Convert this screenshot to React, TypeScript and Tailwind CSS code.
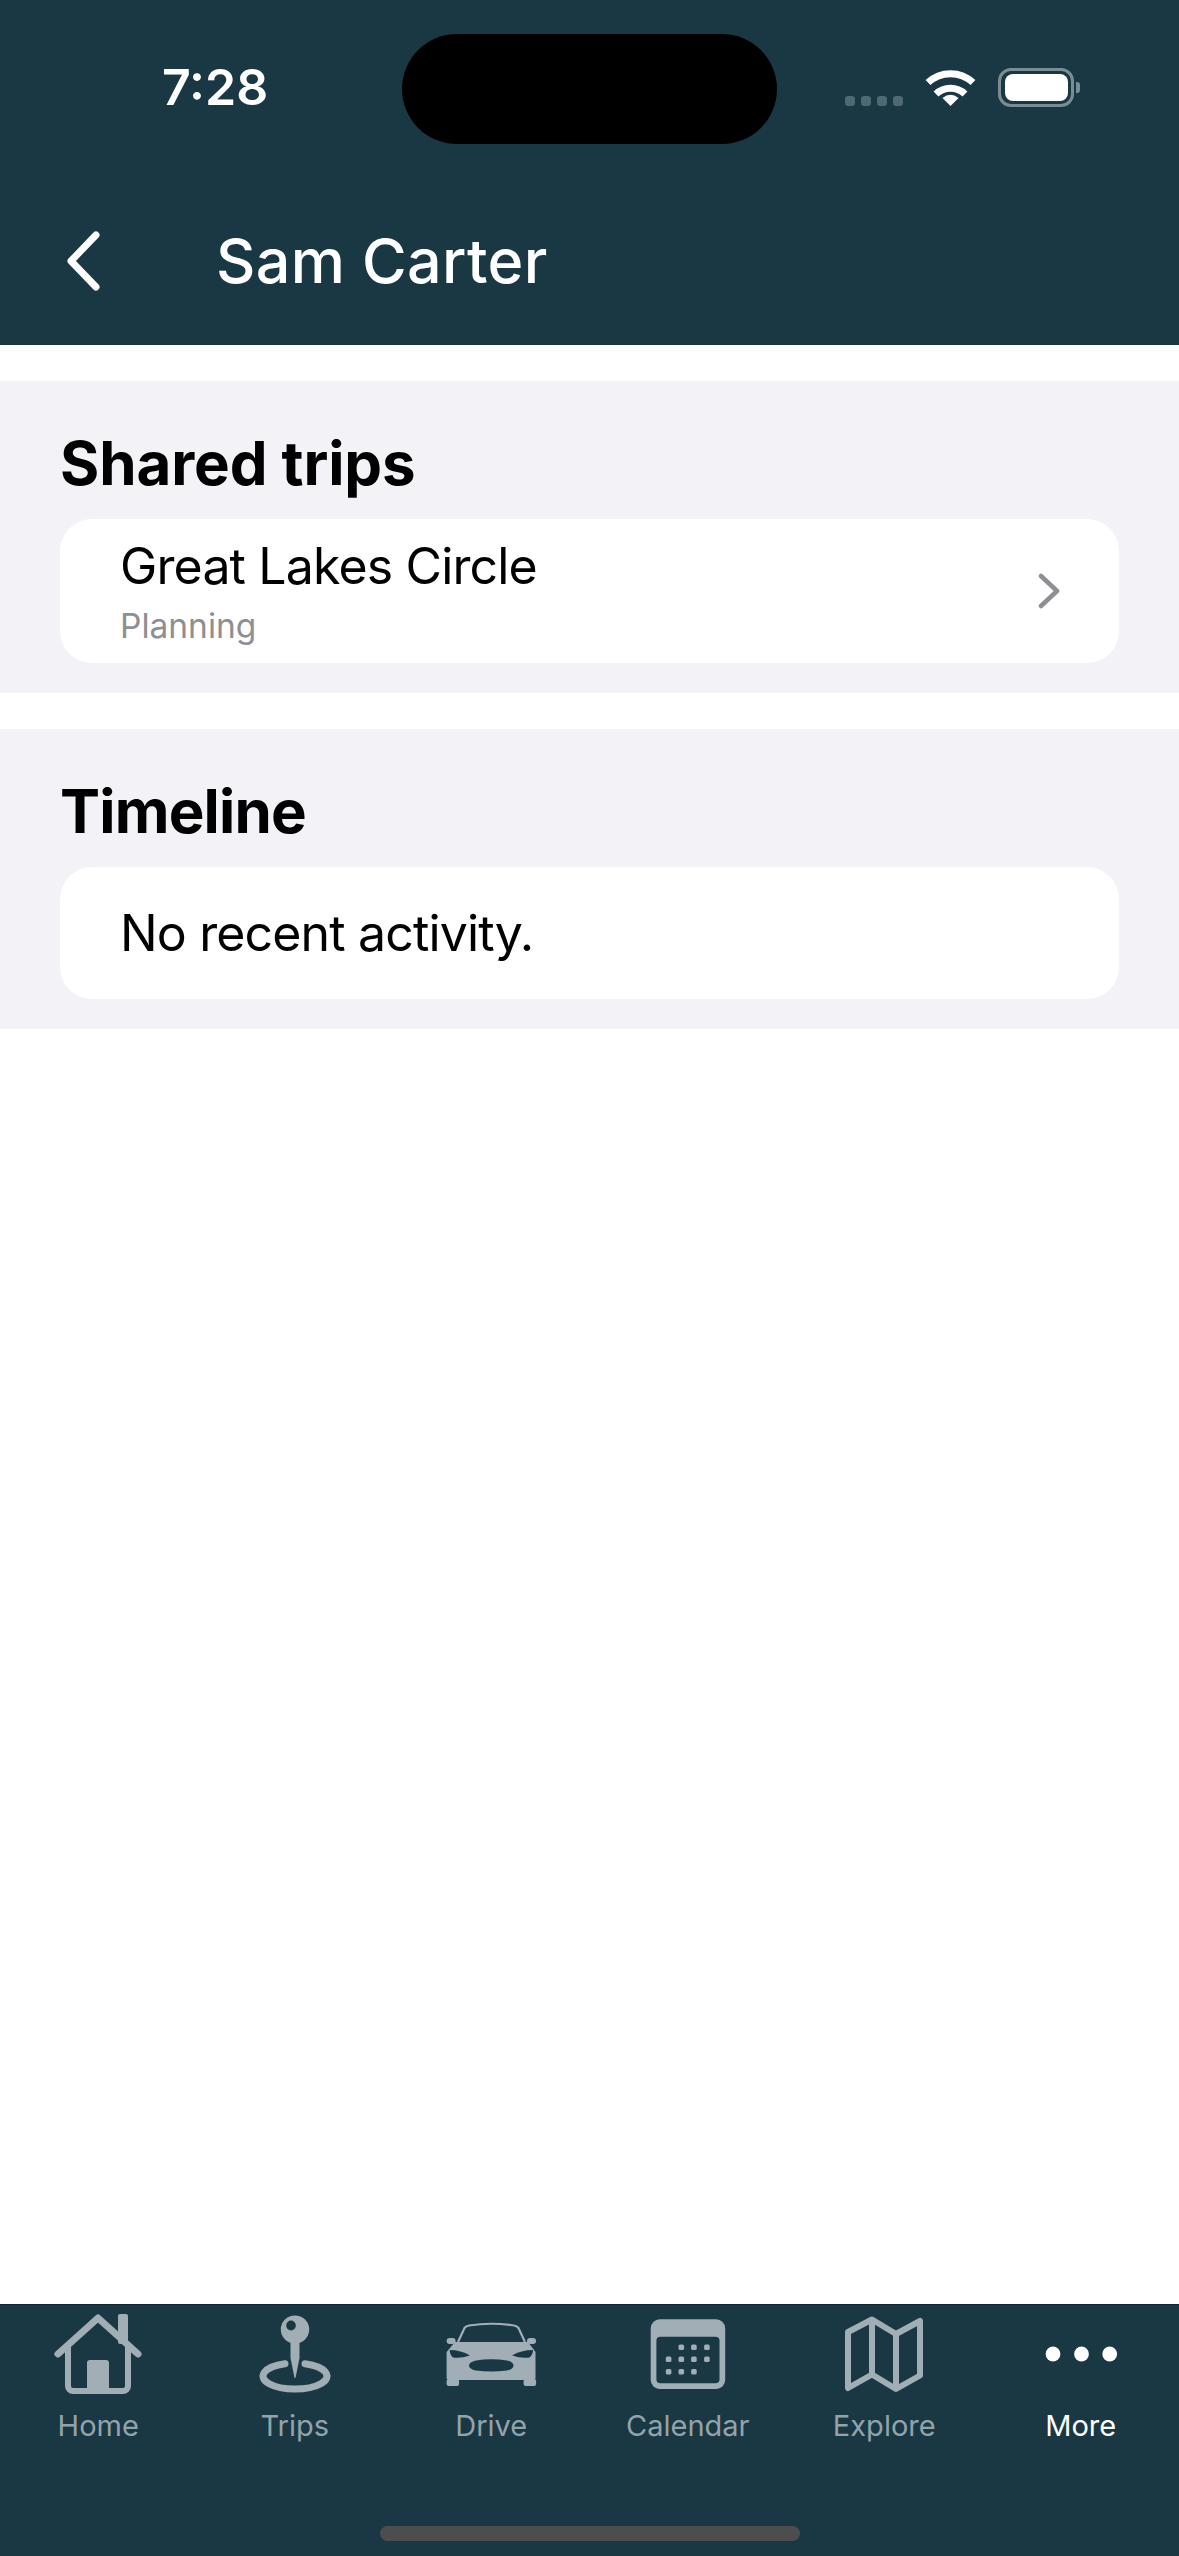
import { ReactNode } from "react";

const tabGray = "#a1aeb5";
const navBg = "#193843";

function HomeIcon() {
  return (
    <svg viewBox="0 0 120 90" className="h-[90px] w-[120px]" fill="none">
      <rect x="80" y="6" width="10" height="30" rx="2" fill={tabGray} />
      <path d="M30 38V78a5 5 0 0 0 5 5H85a5 5 0 0 0 5-5V38" stroke={tabGray} strokeWidth="6" />
      <path d="M20 46L60 10L100 46" stroke={tabGray} strokeWidth="7" strokeLinecap="round" strokeLinejoin="round" />
      <path d="M49 83V55a3 3 0 0 1 3-3H68a3 3 0 0 1 3 3V83Z" fill={tabGray} />
    </svg>
  );
}

function TripsIcon() {
  return (
    <svg viewBox="0 0 120 90" className="h-[90px] w-[120px]" fill="none">
      <path d="M50 55.7A32 13 0 1 0 70 55.7" stroke={tabGray} strokeWidth="7" strokeLinecap="round" />
      <path d="M55.5 30H64.5V50L60.5 70H59.5L55.5 50Z" fill={tabGray} />
      <ellipse cx="60" cy="21.5" rx="14.2" ry="14" fill={tabGray} />
      <ellipse cx="56" cy="17.5" rx="4.8" ry="5" fill={navBg} />
    </svg>
  );
}

function DriveIcon() {
  return (
    <svg viewBox="0 0 120 90" className="h-[90px] w-[120px]" fill="none">
      <path d="M27 34L33.5 20Q35 18 38 17.5Q60 14 83 17.5Q86 18 87.5 20L94 34" stroke={tabGray} strokeWidth="2.2" />
      <rect x="15.6" y="30" width="9" height="6" rx="3" fill={tabGray} />
      <rect x="96" y="30" width="9" height="6" rx="3" fill={tabGray} />
      <path d="M24 34H97L104.5 44V70Q104.5 72 100 72H20Q15.6 72 15.6 70V44Z" fill={tabGray} />
      <rect x="15.6" y="71" width="12.5" height="7" rx="2" fill={tabGray} />
      <rect x="92.6" y="71" width="12.5" height="7" rx="2" fill={tabGray} />
      <path d="M18.7 42Q30 42 39 47.5Q30 50.5 22 49.5Q18.7 47 18.7 42Z" fill={navBg} />
      <path d="M102 42Q90 42 81 47.5Q90 50.5 98.5 49.5Q102 47 102 42Z" fill={navBg} />
      <path d="M45 52.5Q60 50 76 52.5Q82.5 54 82.5 57.5Q82.5 61 76 62.5Q60 64.5 45 62.5Q38 61 38 57.5Q38 54 45 52.5Z" fill={navBg} />
    </svg>
  );
}

function CalendarIcon() {
  const dots = [
    [53.3, 39.3], [65.9, 39.3], [78.9, 39.3],
    [40.6, 51.3], [53.3, 51.3], [65.9, 51.3], [78.9, 51.3],
    [40.6, 63.7], [53.3, 63.7], [65.9, 63.7],
  ];
  return (
    <svg viewBox="0 0 120 90" className="h-[90px] w-[120px]" fill="none">
      <rect x="22.7" y="11.3" width="74.5" height="69.7" rx="9" fill={tabGray} />
      <rect x="28.4" y="28.7" width="63.1" height="46.6" rx="4" fill={navBg} />
      {dots.map(([x, y], i) => (
        <rect key={i} x={x - 2.8} y={y - 2.8} width="5.6" height="5.6" rx="1.6" fill={tabGray} />
      ))}
    </svg>
  );
}

function ExploreIcon() {
  return (
    <svg viewBox="0 0 120 90" className="h-[90px] w-[120px]" fill="none">
      <path
        d="M24 24L48 11.5L72 26L96 13V67.5L72 81L48 66.5L24 80ZM48 11.5V66.5M72 26V81"
        stroke={tabGray}
        strokeWidth="6"
        strokeLinejoin="round"
      />
    </svg>
  );
}

function MoreIcon() {
  return (
    <svg viewBox="0 0 120 90" className="h-[90px] w-[120px]" fill="white">
      <circle cx="32" cy="46" r="7.4" />
      <circle cx="60.5" cy="46" r="7.4" />
      <circle cx="88.7" cy="46" r="7.4" />
    </svg>
  );
}

function StatusIcons() {
  return (
    <div className="flex items-start">
      <div className="mt-[96px] flex gap-[6px]">
        {[0, 1, 2, 3].map((i) => (
          <span key={i} className="h-[10px] w-[10px] rounded-[3px] bg-[#4f6973]" />
        ))}
      </div>
      <svg viewBox="0 0 51 37" className="mt-[69px] ml-[22px] h-[37px] w-[51px]" fill="none">
        <path d="M3 13.5A33 33 0 0 1 48 13.5" stroke="white" strokeWidth="7" />
        <path d="M11 25A21 21 0 0 1 40 25" stroke="white" strokeWidth="7" />
        <path d="M25.5 37L17.5 29Q25.5 22.5 33.5 29Z" fill="white" />
      </svg>
      <div className="mt-[68px] ml-[22px] flex h-[39px] w-[76px] items-center justify-center rounded-[13px] border-[3px] border-[#7a8d95]">
        <span className="h-[27px] w-[63px] rounded-[8px] bg-white" />
      </div>
      <span className="mt-[82px] ml-[2px] h-[11px] w-[4px] rounded-r-[3px] bg-[#7a8d95]" />
    </div>
  );
}

function Section({ title, tracking, children }: { title: string; tracking: string; children: ReactNode }) {
  return (
    <section className="bg-[#f2f2f7] px-[60px] pb-[30px]">
      <h2 className={`pt-[46px] pb-[20px] text-[60px] leading-[72px] font-bold text-black ${tracking}`}>{title}</h2>
      {children}
    </section>
  );
}

const tabs = [
  { label: "Home", icon: <HomeIcon /> },
  { label: "Trips", icon: <TripsIcon /> },
  { label: "Drive", icon: <DriveIcon /> },
  { label: "Calendar", icon: <CalendarIcon /> },
  { label: "Explore", icon: <ExploreIcon /> },
  { label: "More", icon: <MoreIcon />, active: true },
];

export default function App() {
  return (
    <div className="flex h-[2556px] w-[1179px] flex-col overflow-hidden bg-white font-[Inter,sans-serif]">
      {/* Header */}
      <header className="h-[345px] shrink-0 bg-[#193843] text-white">
        <div className="flex h-[178px]">
          <div className="w-[402px] pt-[57px] pl-[162px] text-[50px] leading-[60px] font-semibold">7:28</div>
          <div className="mt-[34px] h-[110px] w-[375px] rounded-full bg-black" />
          <div className="pl-[68px]">
            <StatusIcons />
          </div>
        </div>
        <div className="flex items-center pt-[48px] pl-[60px]">
          <svg viewBox="0 0 40 60" className="h-[60px] w-[40px]" fill="none">
            <path d="M36 4L11 30L36 56" stroke="white" strokeWidth="7" strokeLinecap="round" strokeLinejoin="round" />
          </svg>
          <h1 className="ml-[116px] text-[61px] leading-[70px] font-medium tracking-[0.35px]">Sam Carter</h1>
        </div>
      </header>

      {/* Content */}
      <main className="flex flex-1 flex-col gap-[36px] pt-[36px]">
        <Section title="Shared trips" tracking="tracking-[-0.1px]">
          <div className="flex h-[144px] justify-between rounded-[32px] bg-white pr-[58px] pl-[60px]">
            <div className="pt-[17px]">
              <div className="text-[50px] leading-[60px] tracking-[-0.85px] text-black">Great Lakes Circle</div>
              <div className="mt-[7px] text-[33.5px] leading-[46px] text-[#8e8e93]">Planning</div>
            </div>
            <svg viewBox="0 0 24 36" className="my-auto h-[36px] w-[24px]" fill="none">
              <path d="M4 3L20 18L4 33" stroke="#8e8e93" strokeWidth="4.5" strokeLinecap="round" strokeLinejoin="round" />
            </svg>
          </div>
        </Section>
        <Section title="Timeline" tracking="tracking-[-0.8px]">
          <div className="flex h-[132px] items-center rounded-[32px] bg-white pl-[60px] text-[50px] leading-[60px] tracking-[-0.85px] text-black">
            No recent activity.
          </div>
        </Section>
      </main>

      {/* Tab bar */}
      <nav className="h-[252px] shrink-0 border-t-[1px] border-[#10262f] bg-[#193843]">
        <div className="grid grid-cols-6 pt-[3px]">
          {tabs.map((tab) => (
            <div key={tab.label} className="flex flex-col items-center">
              {tab.icon}
              <span className={`mt-[10px] text-[29px] leading-[36px] ${tab.active ? "text-white" : "text-[#94a3aa]"}`}>
                {tab.label}
              </span>
            </div>
          ))}
        </div>
        <div className="mx-auto mt-[82px] h-[15px] w-[420px] rounded-full bg-[#4d4d4d]" />
      </nav>
    </div>
  );
}
